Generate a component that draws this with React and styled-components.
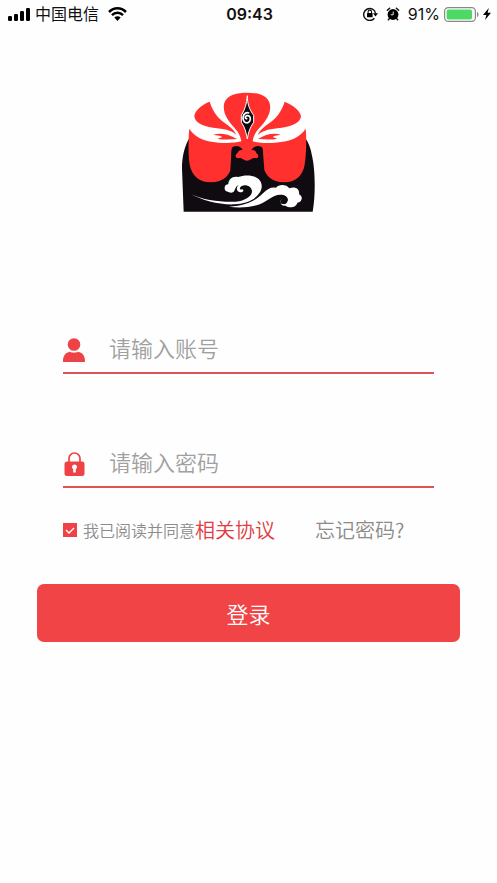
import { useState } from "react";
import styled, { createGlobalStyle } from 'styled-components'

const GlobalStyle = createGlobalStyle`
* {
    box-sizing: border-box;
}
body {
    margin: 0;
    background-color: #fefefe;
    font-family: 'Inter', 'Noto Sans CJK SC', sans-serif;
}
`
const Page = styled.main`
display: flex;
flex-direction: column;
min-height: 100vh;
`
const StatusBar = styled.header`
display: grid;
grid-template-columns: 1fr auto 1fr;
align-items: center;
height: 28px;
padding: 0 6px 0 8px;
font-size: 16px;
line-height: 28px;
color: #111;
`
const StatusGroup = styled.div`
display: flex;
align-items: center;
justify-content: ${(props) => props.$end ? 'flex-end' : 'flex-start'};
gap: ${(props) => props.$end ? '4px' : '5px'};
`
const Carrier = styled.span`
margin-right: 4px;
`
const Time = styled.time`
font-weight: 600;
`
const StatusIcon = styled.svg`
flex: none;
margin-right: ${(props) => props.$spaced ? '4px' : '0'};
`
const Logo = styled.svg`
display: block;
width: 142px;
height: 128px;
margin: 60px auto 0;
`
const Form = styled.form`
display: flex;
flex-direction: column;
margin-top: 106px;
padding: 0 37px;
`
const Field = styled.label`
display: flex;
align-items: center;
gap: 24px;
height: 52px;
margin: 0 26px 62px;
border-bottom: 2px solid #dc5456;
`
const FieldIcon = styled.svg`
flex: none;
width: 22px;
height: 24px;
margin-top: 6px;
`
const Input = styled.input`
flex: 1;
min-width: 0;
height: 40px;
padding: 0;
border: none;
outline: none;
background: transparent;
color: #444;
font-family: 'Noto Sans CJK SC', sans-serif;
font-size: 22px;
font-weight: 350;

&::placeholder {
    color: #a0a0a0;
    opacity: 1;
}
`
const Options = styled.div`
display: flex;
align-items: center;
height: 40px;
margin: -40px 26px 34px;
font-family: 'Noto Sans CJK SC', sans-serif;
font-weight: 350;
line-height: 24px;
white-space: nowrap;
`
const Agree = styled.label`
display: flex;
align-items: center;
gap: 6px;
font-size: 16px;
color: #8c8c8c;
`
const Checkbox = styled.input`
appearance: none;
width: 14px;
height: 14px;
margin: 0;
border: 1px solid #ee4245;
background: ${(props) => props.checked ? '#ee4245' : '#fff'};
`
const CheckWrap = styled.span`
display: grid;

& > * {
    grid-area: 1 / 1;
}
& > svg {
    pointer-events: none;
}
`
const TextLink = styled.a`
font-size: 20px;
color: ${(props) => props.$muted ? '#8c8c8c' : '#e23a40'};
margin-left: ${(props) => props.$muted ? '40px' : '0'};
text-decoration: none;
`
const Button = styled.button`
height: 58px;
border: none;
border-radius: 7px;
background-color: #f04446;
color: #fff;
font-family: 'Noto Sans CJK SC', sans-serif;
font-size: 22px;
font-weight: 350;
cursor: pointer;
`

const MaskLogo = () => (
    <Logo viewBox="0 0 426 384" role="img" aria-label="Logo">
        <path fill="#100b10" d="M34 150C18 178 12 210 12 242L17 371H404C413 322 412 245 402 203C398 180 392 164 382 150Z" />
        <path fill="#fefefe" d="M34 122L92 41L140 40H274L322 41L384 122L370 170L207 180L40 170Z" />
        <path fill="#ff302e" d="M34 122C31 150 30 200 35 230C42 264 64 283 98 283C137 283 161 260 162 222C162 204 158 190 165 181C172 173 188 174 194 184H220C226 174 242 173 250 181C257 190 254 204 254 222C256 260 280 283 319 283C352 283 374 264 380 230C385 200 386 150 383 122C366 147 340 160 292 164C268 166 243 165 224 160C230 120 258 118 274 75C286 30 254 14 207 14C160 14 128 30 140 75C156 118 184 120 190 160C171 165 146 166 122 164C76 160 50 147 34 122Z" />
        <path fill="#ff302e" d="M95 41C69 51 49 69 49 86C53 108 83 117 118 121C148 124 164 130 176 142C160 104 116 108 95 41ZM320 41C345 51 369 70 369 86C365 108 333 117 299 121C267 124 252 130 239 142C255 104 299 108 320 41Z" />
        <path fill="#ff302e" d="M106 140C127 133 151 138 177 153C159 154 137 157 119 152L133 147C125 142 115 142 106 140ZM308 140C287 133 264 138 240 153C258 154 279 157 298 152L284 147C291 142 299 142 308 140Z" />
        <path fill="#100b10" d="M161 181C168 170 190 172 194 187C187 182 178 190 177 195C172 201 172 209 180 211C193 208 196 218 207 218C218 218 220 208 234 211C242 209 242 201 238 195C236 190 228 182 220 187C224 172 248 170 254 181L259 245H157Z" />
        <path fill="#ff302e" d="M190 181H225L220 187C228 184 235 189 235 196C243 200 243 209 235 211C222 207 219 218 207 218C195 218 192 207 180 211C171 209 171 200 178 196C180 189 187 184 194 187Z" />
        <path fill="#100b10" stroke="#fefefe" strokeWidth="3" d="M208 23C208 48 214 64 227 82V103C216 119 211 132 208 153C204 132 201 119 190 103V82C201 64 206 48 208 23Z" />
        <path fill="none" stroke="#fefefe" strokeWidth="5" strokeLinecap="round" d="M206 92C201 93 200 85 206 83C216 81 220 91 215 100C206 111 194 101 195 88C197 76 206 72 212 75" />
        <path fill="#fefefe" d="M38 318C77 337 131 343 173 341C202 339 223 325 222 309C220 294 203 288 191 294C181 301 187 307 193 304C201 307 192 315 184 312C173 309 175 294 184 291C170 293 173 308 166 312C158 317 151 311 143 309C136 299 141 289 151 289C151 273 165 263 180 267C205 258 235 262 246 278C255 291 252 308 240 320C226 339 199 347 169 349C124 351 74 337 38 318Z" />
        <path fill="#fefefe" d="M153 356C207 353 231 339 255 316C269 301 281 296 294 299C302 287 327 289 334 301C352 294 366 303 363 319C377 325 372 343 358 344C355 359 333 361 323 353C309 356 303 342 311 334C302 341 309 351 318 347C332 342 330 324 316 321C287 314 266 344 236 352C209 359 179 360 153 356Z" />
        <path fill="none" stroke="#100b10" strokeWidth="4" strokeLinecap="round" d="M309 326C320 321 332 331 326 341C322 349 311 348 310 339" />
    </Logo>
)

const Check = () => (
    <svg width="14" height="14" viewBox="0 0 14 14" aria-hidden="true">
        <path d="M3 7L6 10L11 5" fill="none" stroke="#fff" strokeWidth="1.4" />
    </svg>
)

const Status = () => (
    <StatusBar>
        <StatusGroup>
            <StatusIcon width="22" height="14" viewBox="0 0 22 14" aria-hidden="true">
                <rect x="0" y="9" width="4" height="5" rx="1.2" />
                <rect x="6" y="7" width="4" height="7" rx="1.2" />
                <rect x="12" y="4" width="4" height="10" rx="1.2" />
                <rect x="18" y="1" width="4" height="13" rx="1.2" />
            </StatusIcon>
            <Carrier>中国电信</Carrier>
            <StatusIcon width="19" height="14" viewBox="0 0 19 14" aria-hidden="true">
                <path d="M1 5C6 0 13 0 18 5M4 8.2C7 5 12 5 15 8.2" fill="none" stroke="#000" strokeWidth="2.5" />
                <path d="M6.3 10.5C8.3 8.8 10.7 8.8 12.7 10.5L9.5 14Z" />
            </StatusIcon>
        </StatusGroup>
        <Time>09:43</Time>
        <StatusGroup $end>
            <StatusIcon $spaced width="15" height="14" viewBox="0 0 15 14" aria-hidden="true">
                <path d="M11.4 11.2A6 6 0 1 1 12.6 6.5" fill="none" stroke="#111" strokeWidth="1.4" />
                <path d="M10 6.3H15L12.5 9.4Z" />
                <rect x="4" y="6" width="5.6" height="4.3" rx=".6" />
                <path d="M5.1 6V4.8A1.7 1.7 0 0 1 8.5 4.8V6" fill="none" stroke="#111" strokeWidth="1.1" />
            </StatusIcon>
            <StatusIcon $spaced width="14" height="14" viewBox="0 0 14 14" aria-hidden="true">
                <circle cx="7" cy="7.5" r="5.4" />
                <path d="M1.4 3.2L3.6 1.2M10.4 1.2L12.6 3.2M3.4 11.6L2.4 12.8M10.6 11.6L11.6 12.8" stroke="#111" strokeWidth="1.5" strokeLinecap="round" />
                <path d="M7.2 4.6V7.8H4.8" fill="none" stroke="#fff" strokeWidth=".9" />
            </StatusIcon>
            <span>91%</span>
            <StatusIcon width="35" height="15" viewBox="0 0 35 15" aria-hidden="true">
                <rect x=".6" y=".6" width="30.8" height="13.8" rx="3.6" fill="#fff" stroke="#888" strokeWidth="1.2" />
                <rect x="2.6" y="2.6" width="25.4" height="9.8" rx="1.6" fill="#4cd964" />
                <path d="M33 5C35 5.6 35 9.4 33 10Z" fill="#888" />
            </StatusIcon>
            <StatusIcon width="8" height="12" viewBox="0 0 8 12" aria-hidden="true">
                <path d="M5.8 0L0 7H3.4L2 12L8 4.8H4.6Z" />
            </StatusIcon>
        </StatusGroup>
    </StatusBar>
)

const App = () => {
    const [account, setAccount] = useState('')
    const [password, setPassword] = useState('')
    const [agreed, setAgreed] = useState(true)

    const handleSubmit = (event) => {
        event.preventDefault()
    }

    return (
        <Page>
            <GlobalStyle />
            <Status />
            <MaskLogo />
            <Form onSubmit={handleSubmit}>
                <Field>
                    <FieldIcon viewBox="0 0 22 24" aria-hidden="true">
                        <ellipse cx="11" cy="6.5" rx="6.3" ry="6.3" fill="#ee4245" />
                        <path d="M0 23.4C0 17.5 2.5 14.6 7 13.8C9 15 13 15 15 13.8C19.5 14.6 22 17.5 22 23.4Q22 24 21 24H1Q0 24 0 23.4Z" fill="#ee4245" />
                    </FieldIcon>
                    <Input type="text" aria-label="请输入账号" placeholder="请输入账号" value={account} onChange={(event) => setAccount(event.target.value)} />
                </Field>
                <Field>
                    <FieldIcon viewBox="0 0 22 24" aria-hidden="true">
                        <path d="M6 10V6.5A5.5 5.5 0 0 1 17 6.5V10" fill="none" stroke="#ee4245" strokeWidth="1.7" />
                        <rect x="1.5" y="9.5" width="20" height="14.5" rx="2.5" fill="#ee4245" />
                        <path d="M11.5 12.4A2.6 2.6 0 0 0 10.2 17.2V20.5H12.8V17.2A2.6 2.6 0 0 0 11.5 12.4Z" fill="#fff" />
                    </FieldIcon>
                    <Input type="password" aria-label="请输入密码" placeholder="请输入密码" value={password} onChange={(event) => setPassword(event.target.value)} />
                </Field>
                <Options>
                    <Agree>
                        <CheckWrap>
                            <Checkbox type="checkbox" checked={agreed} onChange={(event) => setAgreed(event.target.checked)} />
                            <Check />
                        </CheckWrap>
                        我已阅读并同意
                    </Agree>
                    <TextLink href="#agreement">相关协议</TextLink>
                    <TextLink $muted href="#forgot">忘记密码?</TextLink>
                </Options>
                <Button type="submit">登录</Button>
            </Form>
        </Page>
    )
}

export default App
